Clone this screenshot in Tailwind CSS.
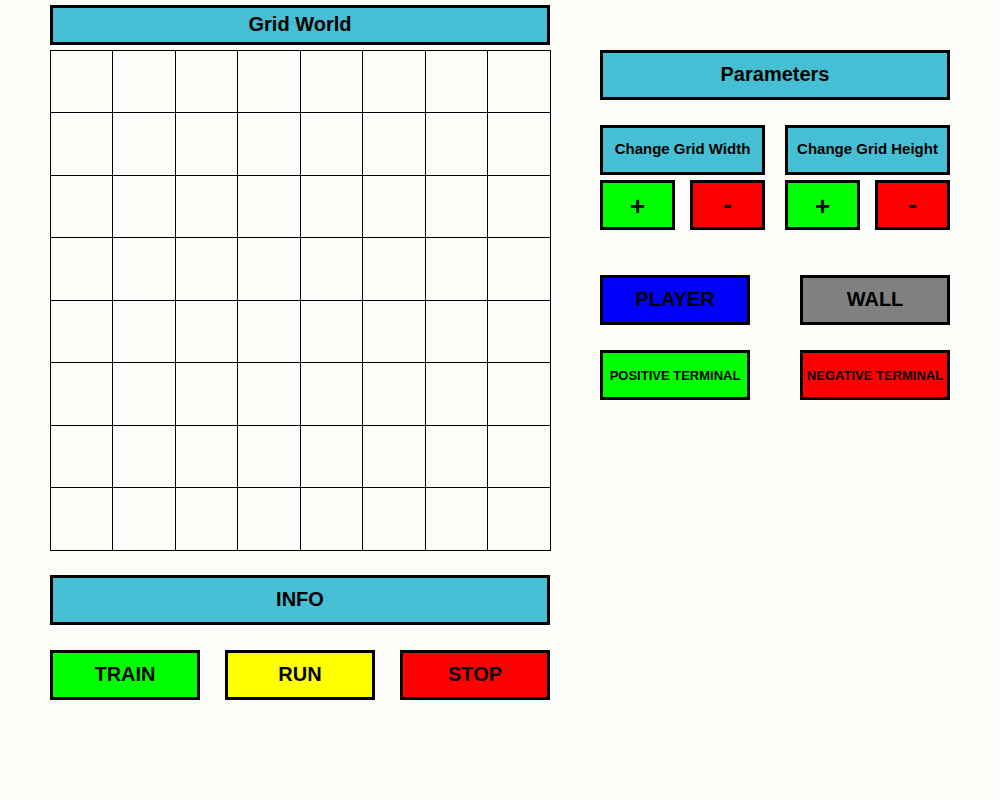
<!DOCTYPE html>
<html lang="en">
<head>
<meta charset="utf-8">
<meta name="viewport" content="width=device-width, initial-scale=1">
<title>Grid World</title>
<script src="https://cdn.jsdelivr.net/npm/@tailwindcss/browser@4"></script>
<style>
  /* Dithered fills */
  .dots { background: conic-gradient(from 270deg at 1px 1px, #ffffa8 90deg, transparent 0) 0 0 / 8px 8px, conic-gradient(from 270deg at 1px 1px, #ffffa8 90deg, transparent 0) 4px 4px / 8px 8px, #fdfdfe; }
  .teal { background: conic-gradient(#40b6f4 25%, #4ac8b4 0 50%, #40b6f4 0 75%, #4ac8b4 0) 0 0 / 2px 2px fixed; }
  .wall { background: conic-gradient(#7a7ab0 25%, #868650 0 50%, #7a7ab0 0 75%, #868650 0) 0 0 / 2px 2px fixed; }
</style>
</head>
<body class="dots min-h-screen font-['Liberation_Sans',Arial,sans-serif] font-bold text-black">
<main class="flex items-start gap-[50px] px-[50px] pt-[5px]">
  <section class="min-w-0 flex-[500]">
    <h1 class="teal flex h-10 items-center justify-center border-3 border-black pb-0.5 text-xl">Grid World</h1>
    <div id="grid" class="mt-[5px] -mr-px grid grid-cols-[repeat(4,62fr_63fr)] grid-rows-[repeat(4,62px_63px)] border-r border-b border-black"></div>
    <h2 class="teal mt-6 flex h-[50px] items-center justify-center border-3 border-black pb-0.5 text-xl">INFO</h2>
    <div class="mt-[25px] grid grid-cols-3 gap-[25px]">
      <button class="h-[50px] border-3 border-black bg-[#00ff00] pb-0.5 text-xl">TRAIN</button>
      <button class="h-[50px] border-3 border-black bg-[#ffff00] pb-0.5 text-xl">RUN</button>
      <button class="h-[50px] border-3 border-black bg-[#ff0000] pb-0.5 text-xl">STOP</button>
    </div>
  </section>
  <section class="mt-[45px] min-w-0 flex-[350]">
    <h2 class="teal flex h-[50px] items-center justify-center border-3 border-black pb-0.5 text-xl">Parameters</h2>
    <div class="mt-[25px] grid grid-cols-2 gap-5">
      <div>
        <h3 class="teal flex h-[50px] items-center justify-center border-3 border-black pb-0.5 text-[15px] whitespace-nowrap">Change Grid Width</h3>
        <div class="mt-[5px] grid grid-cols-2 gap-[15px]">
          <button class="h-[50px] border-3 border-black bg-[#00ff00] pt-0.5 text-[26px]">+</button>
          <button class="h-[50px] border-3 border-black bg-[#ff0000] pb-0.5 text-[26px]">-</button>
        </div>
      </div>
      <div>
        <h3 class="teal flex h-[50px] items-center justify-center border-3 border-black pb-0.5 text-[15px] whitespace-nowrap">Change Grid Height</h3>
        <div class="mt-[5px] grid grid-cols-2 gap-[15px]">
          <button class="h-[50px] border-3 border-black bg-[#00ff00] pt-0.5 text-[26px]">+</button>
          <button class="h-[50px] border-3 border-black bg-[#ff0000] pb-0.5 text-[26px]">-</button>
        </div>
      </div>
    </div>
    <div class="mt-[45px] grid grid-cols-2 gap-x-[50px] gap-y-[25px]">
      <button class="h-[50px] border-3 border-black bg-[#0000ff] pb-0.5 text-xl">PLAYER</button>
      <button class="wall h-[50px] border-3 border-black pb-0.5 text-xl">WALL</button>
      <button class="h-[50px] border-3 border-black bg-[#00ff00] pt-0.5 text-[13px] whitespace-nowrap">POSITIVE TERMINAL</button>
      <button class="h-[50px] border-3 border-black bg-[#ff0000] pt-0.5 text-[13px] whitespace-nowrap">NEGATIVE TERMINAL</button>
    </div>
  </section>
</main>
<script>
  const grid = document.getElementById('grid');
  for (let i = 0; i < 64; i++) {
    const cell = document.createElement('button');
    cell.className = 'border-t border-l border-black';
    cell.setAttribute('aria-label', `Row ${Math.floor(i / 8) + 1}, column ${i % 8 + 1}`);
    grid.append(cell);
  }
</script>
</body>
</html>
